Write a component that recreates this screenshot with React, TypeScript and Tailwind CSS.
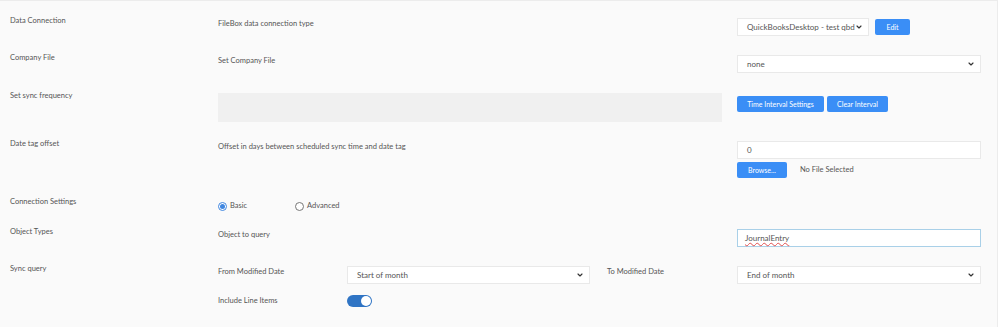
import { ChevronDown } from "lucide-react";

const font = { fontFamily: "Lato, 'Open Sans', sans-serif" };

function Select({ value, className }: { value: string; className: string }) {
  return (
    <div className={`flex items-center justify-between h-[18px] bg-white border border-[#e9e9e9] pl-[9px] pr-[5px] text-[8px] text-[#555] whitespace-nowrap ${className}`}>
      <span>{value}</span>
      <ChevronDown size={8} strokeWidth={3.5} className="text-[#333] shrink-0" />
    </div>
  );
}

function Button({ children, className }: { children: string; className: string }) {
  return (
    <button className={`h-[16px] rounded-[2px] bg-[#3a8ef6] text-white text-[7px] flex items-center justify-center whitespace-nowrap ${className}`}>
      {children}
    </button>
  );
}

function Label({ children }: { children: string }) {
  return <div className="w-[208px] shrink-0 text-[7.5px] leading-[12px] text-[#555]">{children}</div>;
}

export default function App() {
  return (
    <div style={font} className="w-[998px] h-[327px] bg-[#fafafa] border-t border-r border-[#ececec] pl-[10px] pt-[14px] text-[#555]">
      <div className="flex h-[37px]">
        <Label>Data Connection</Label>
        <div className="w-[519px] mt-[3px] text-[7.5px] leading-[12px]">FileBox data connection type</div>
        <div className="flex gap-[6px] mt-[3px]">
          <Select value="QuickBooksDesktop - test qbd" className="w-[132px]" />
          <Button className="w-[35px] mt-[1px]">Edit</Button>
        </div>
      </div>

      <div className="flex h-[38px]">
        <Label>Company File</Label>
        <div className="w-[519px] mt-[3px] text-[7.5px] leading-[12px]">Set Company File</div>
        <Select value="none" className="w-[244px] mt-[3px]" />
      </div>

      <div className="flex h-[48px]">
        <Label>Set sync frequency</Label>
        <div className="w-[519px] pr-[15px]">
          <div className="mt-[3px] h-[29px] bg-[#f0f0f0]" />
        </div>
        <div className="flex gap-[3px] mt-[6px]">
          <Button className="w-[87px] h-[15px]">Time Interval Settings</Button>
          <Button className="w-[61px] h-[15px]">Clear Interval</Button>
        </div>
      </div>

      <div className="flex h-[58px]">
        <Label>Date tag offset</Label>
        <div className="w-[519px] mt-[3px] text-[7.5px] leading-[12px]">Offset in days between scheduled sync time and date tag</div>
        <div className="mt-[3px] w-[244px]">
          <div className="h-[18px] bg-white border border-[#e9e9e9] pl-[9px] flex items-center text-[8px]">0</div>
          <div className="flex items-center gap-[13px] mt-[3px]">
            <Button className="w-[50px]">Browse...</Button>
            <span className="text-[7.5px] text-[#555]">No File Selected</span>
          </div>
        </div>
      </div>

      <div className="flex h-[30px]">
        <Label>Connection Settings</Label>
        <div className="flex items-center mt-[5px] h-[10px] text-[7.5px]">
          <span className="w-[9px] h-[9px] rounded-full border border-[#3f86e0] flex items-center justify-center bg-white">
            <span className="w-[5px] h-[5px] rounded-full bg-[#3f86e0]" />
          </span>
          <span className="ml-[3px] w-[65px]">Basic</span>
          <span className="w-[9px] h-[9px] rounded-full border border-[#777] bg-white" />
          <span className="ml-[3px]">Advanced</span>
        </div>
      </div>

      <div className="flex h-[37px]">
        <Label>Object Types</Label>
        <div className="w-[519px] mt-[3px] text-[7.5px] leading-[12px]">Object to query</div>
        <div className="mt-[3px] w-[244px] h-[18px] bg-white border border-[#a9d0e8] pl-[7px] flex items-center text-[8px]">
          <span className="underline decoration-wavy decoration-[#e05050] decoration-[0.5px] underline-offset-[1px]">JournalEntry</span>
        </div>
      </div>

      <div className="flex">
        <Label>Sync query</Label>
        <div className="w-[519px] mt-[2px]">
          <div className="flex">
            <div className="w-[129px] mt-[1px] text-[7.5px] leading-[12px]">From Modified Date</div>
            <Select value="Start of month" className="w-[243px] mt-[1px]" />
            <div className="ml-[17px] mt-[1px] text-[7.5px] leading-[12px]">To Modified Date</div>
          </div>
          <div className="flex mt-[11px]">
            <div className="w-[129px] text-[7.5px] leading-[12px]">Include Line Items</div>
            <div className="w-[25px] h-[12px] rounded-full bg-[#2f74c4] flex items-center justify-end pr-[1px]">
              <span className="w-[10px] h-[10px] rounded-full bg-white" />
            </div>
          </div>
        </div>
        <Select value="End of month" className="w-[244px] mt-[3px]" />
      </div>
    </div>
  );
}
